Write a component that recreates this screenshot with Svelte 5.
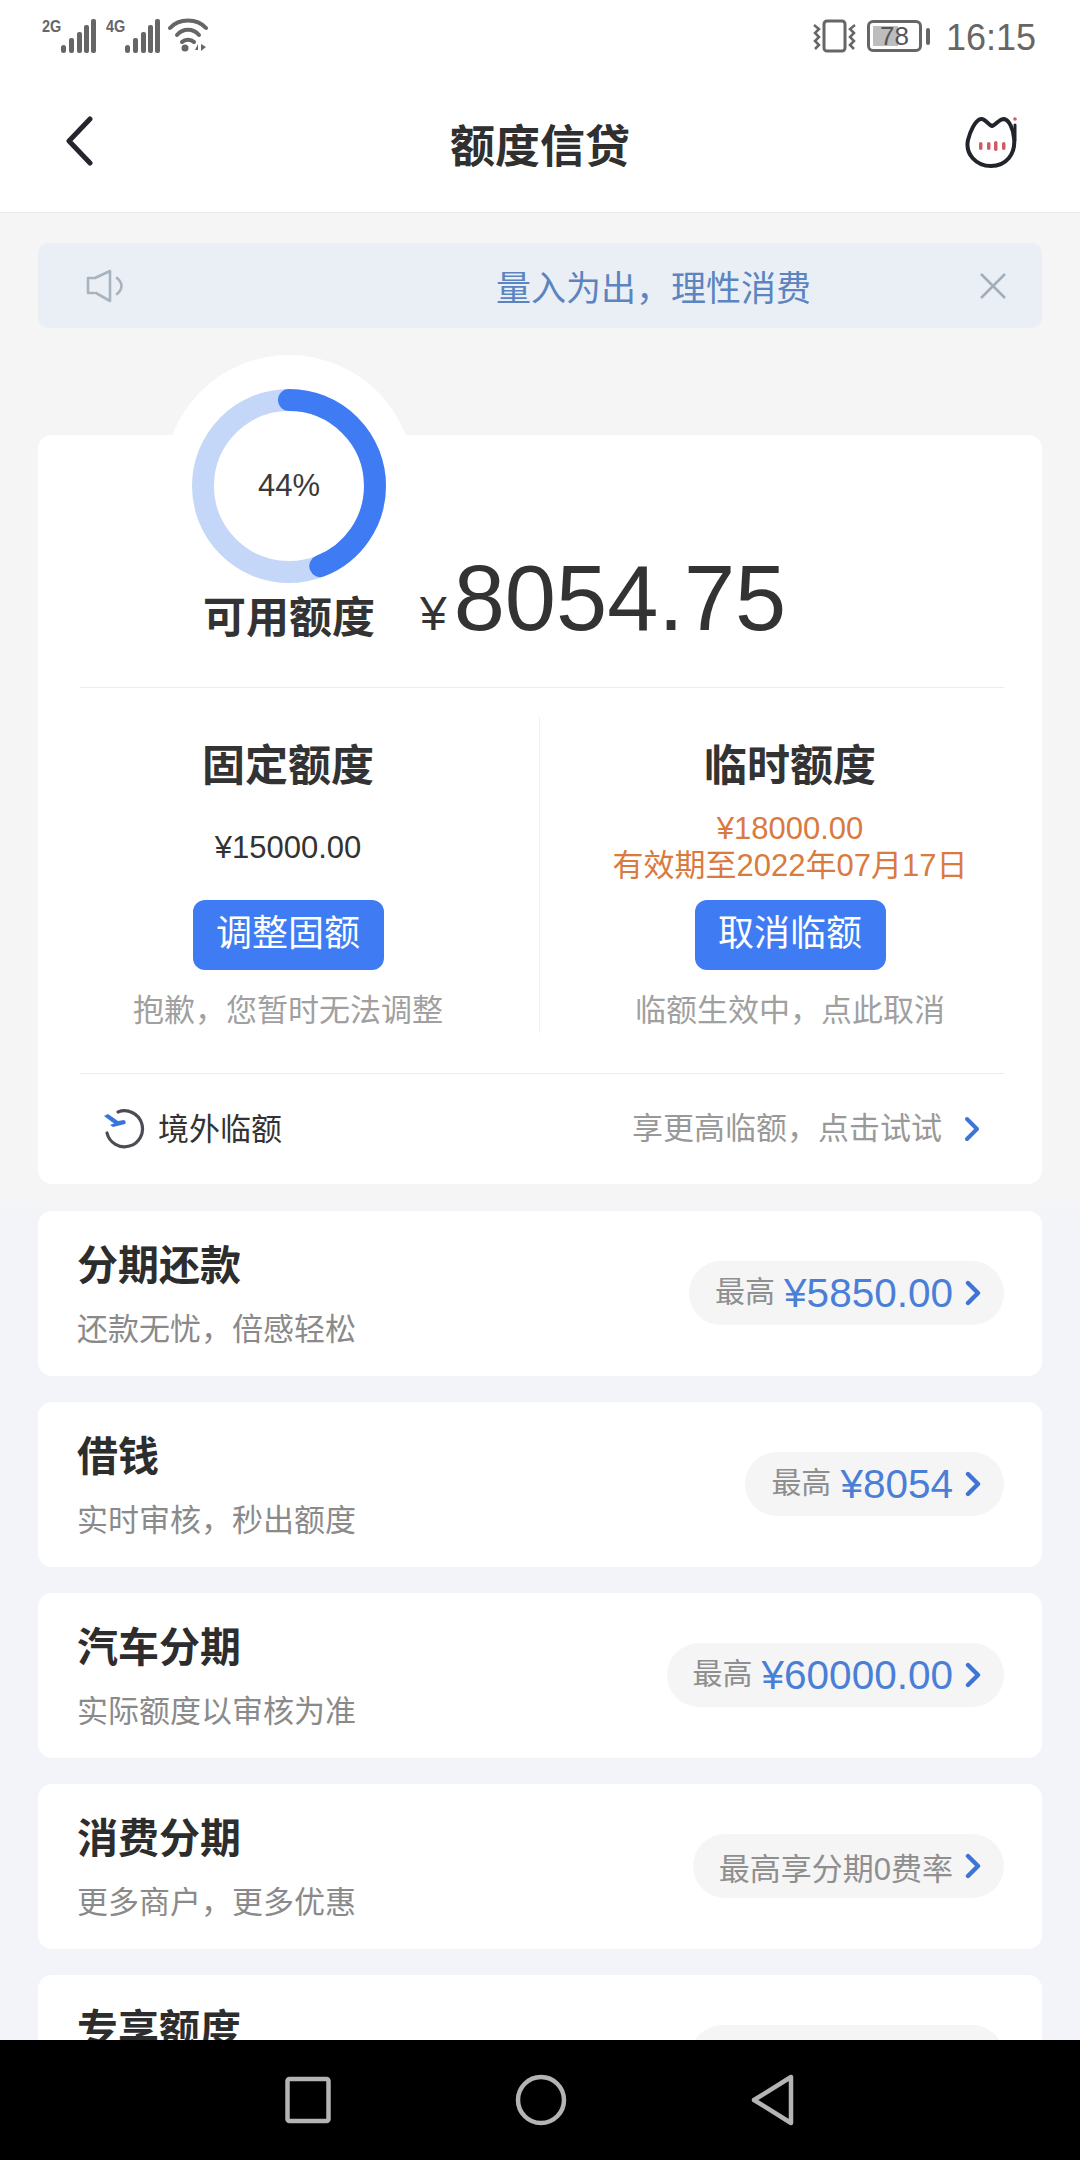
<script>
  const rows = [
    { title: '分期还款', sub: '还款无忧，倍感轻松', amount: '¥5850.00' },
    { title: '借钱', sub: '实时审核，秒出额度', amount: '¥8054' },
    { title: '汽车分期', sub: '实际额度以审核为准', amount: '¥60000.00' },
    { title: '消费分期', sub: '更多商户，更多优惠', note: '最高享分期0费率' }
  ];
  const r = 86;
  const c = 2 * Math.PI * r;
  const dash = `${c * 0.44} ${c}`;
</script>

<div class="phone">
  <div class="top">
    <div class="status">
      <div class="status-left">
        <span class="net">2G</span>
        <svg width="38" height="36" viewBox="0 0 38 36" class="bars">
          <g fill="#666"><rect x="0" y="26" width="5" height="8" rx="2.5"/><rect x="8" y="19" width="5" height="15" rx="2"/><rect x="16" y="13" width="5" height="21" rx="2"/><rect x="23" y="6" width="5" height="28" rx="2"/><rect x="30" y="0" width="5" height="34" rx="2"/></g>
        </svg>
        <span class="net net2">4G</span>
        <svg width="38" height="36" viewBox="0 0 38 36" class="bars">
          <g fill="#666"><rect x="0" y="26" width="5" height="8" rx="2.5"/><rect x="8" y="19" width="5" height="15" rx="2"/><rect x="16" y="13" width="5" height="21" rx="2"/><rect x="23" y="6" width="5" height="28" rx="2"/><rect x="30" y="0" width="5" height="34" rx="2"/></g>
        </svg>
        <svg width="42" height="36" viewBox="0 0 42 36" class="wifi">
          <g fill="none" stroke="#666" stroke-width="4" stroke-linecap="round">
            <path d="M2 10 C11 0 29 0 38 10"/><path d="M9 17 C15 10 25 10 31 17"/><path d="M14 24 C17 21 23 21 26 24"/>
          </g>
          <circle cx="17" cy="30" r="3.5" fill="#666"/>
          <path d="M27 32 L30 26 V32 Z M33 26 V33 L38 29 Z" fill="#666"/>
        </svg>
      </div>
      <div class="status-right">
        <svg class="vib" width="44" height="34" viewBox="0 0 44 34">
          <rect x="11" y="2" width="21" height="30" rx="3" fill="none" stroke="#666" stroke-width="3"/>
          <g fill="none" stroke="#666" stroke-width="2.5"><path d="M1 6 L6 10 L2 14 L6 18 L2 22 L6 26 L2 30"/><path d="M42 6 L37 10 L41 14 L37 18 L41 22 L37 26 L41 30"/></g>
        </svg>
        <div class="battery"><span class="fill"></span><span class="level">78</span></div>
        <span class="tip"></span>
        <span class="time">16:15</span>
      </div>
    </div>
    <header class="nav">
      <svg class="back" width="30" height="50" viewBox="0 0 30 50"><path d="M26 3 L5 25 L26 47" fill="none" stroke="#25252d" stroke-width="5" stroke-linecap="round" stroke-linejoin="round"/></svg>
      <h1>额度信贷</h1>
      <svg class="cat" width="56" height="54" viewBox="0 0 56 54">
        <path d="M4 24 C6 16 11 4 17 3 C21 2 24 9 28 10 C32 9 35 3 40 3 C45 4 49 12 50 22 C52 38 42 50 27 50 C12 50 1 38 4 24 Z" fill="#fff" stroke="#22242c" stroke-width="4" stroke-linejoin="round"/>
        <path d="M51 9 V24" stroke="#22242c" stroke-width="3" stroke-linecap="round"/>
        <g fill="#cf5a68"><rect x="15" y="26" width="3.5" height="8" rx="1.7"/><rect x="23" y="26" width="3.5" height="8" rx="1.7"/><rect x="30" y="25" width="3.5" height="10" rx="1.7"/><rect x="38" y="26" width="3.5" height="8" rx="1.7"/></g>
        <circle cx="51" cy="3" r="1.8" fill="#cf5a68"/>
      </svg>
    </header>
  </div>

  <main class="content">
    <div class="notice">
      <svg width="38" height="34" viewBox="0 0 38 34"><g fill="none" stroke="#a8b3c0" stroke-width="2.6" stroke-linejoin="round" stroke-linecap="round"><path d="M8 24 H2 V9 H9 L24 2 V32 L10 24"/><path d="M31 9 C37 14 37 20 31 25"/></g></svg>
      <span>量入为出，理性消费</span>
      <svg width="28" height="28" viewBox="0 0 28 28"><path d="M2 2 L26 26 M26 2 L2 26" stroke="#a3aebb" stroke-width="2.6" fill="none"/></svg>
    </div>

    <section class="card main">
      <div class="summary">
        <div class="gauge-col">
          <div class="gauge">
            <svg width="194" height="194" viewBox="0 0 194 194">
              <circle cx="97" cy="97" r={r} fill="#fff" stroke="#c5d7f8" stroke-width="22"/>
              <circle cx="97" cy="97" r={r} fill="none" stroke="#3f7cf4" stroke-width="22" stroke-linecap="round" stroke-dasharray={dash} transform="rotate(-90 97 97)"/>
            </svg>
            <span class="pct">44%</span>
          </div>
          <div class="avail">可用额度</div>
        </div>
        <div class="amount"><span class="yen">¥</span>8054.75</div>
      </div>

      <div class="limits">
        <div class="limit">
          <h2>固定额度</h2>
          <div class="value">¥15000.00</div>
          <div class="btn">调整固额</div>
          <p>抱歉，您暂时无法调整</p>
        </div>
        <div class="limit">
          <h2>临时额度</h2>
          <div class="value temp"><span>¥18000.00</span><span>有效期至2022年07月17日</span></div>
          <div class="btn">取消临额</div>
          <p>临额生效中，点此取消</p>
        </div>
      </div>

      <div class="abroad">
        <svg width="42" height="42" viewBox="0 0 42 42">
          <path d="M14 4 A18 18 0 1 1 3 25" fill="none" stroke="#4a4d54" stroke-width="3.2" stroke-linecap="round"/>
          <path d="M0 8 L4 6 L14 13 L20 12 Q23 14 21 16 L9 19 L6 17 L10 15.5 Z" fill="#3a74dc"/>
        </svg>
        <span class="abroad-title">境外临额</span>
        <span class="abroad-tip">享更高临额，点击试试</span>
        <svg class="chev" width="16" height="26" viewBox="0 0 16 26"><path d="M3 3 L13 13 L3 23" fill="none" stroke="#3f74d6" stroke-width="4" stroke-linecap="round" stroke-linejoin="round"/></svg>
      </div>
    </section>

    {#each rows as row}
      <section class="card row">
        <div>
          <h3>{row.title}</h3>
          <p>{row.sub}</p>
        </div>
        <div class="pill">
          {#if row.note}
            <span class="note">{row.note}</span>
          {:else}
            <span class="label">最高</span>
            <span class="money">{row.amount}</span>
          {/if}
          <svg class="chev" width="16" height="26" viewBox="0 0 16 26"><path d="M3 3 L13 13 L3 23" fill="none" stroke="#3f74d6" stroke-width="4.4" stroke-linecap="round" stroke-linejoin="round"/></svg>
        </div>
      </section>
    {/each}

    <section class="card row">
      <div>
        <h3>专享额度</h3>
      </div>
      <div class="pill blank"></div>
    </section>
  </main>

  <footer class="sysnav">
    <svg width="46" height="48" viewBox="0 0 46 48"><rect x="2.5" y="3" width="41" height="42" rx="2" fill="none" stroke="#b4b4b4" stroke-width="4.5"/></svg>
    <svg width="52" height="52" viewBox="0 0 52 52"><circle cx="26" cy="26" r="23" fill="none" stroke="#b4b4b4" stroke-width="4.5"/></svg>
    <svg width="44" height="52" viewBox="0 0 44 52"><path d="M40 3 V49 L3 26 Z" fill="none" stroke="#b4b4b4" stroke-width="4.5" stroke-linejoin="round"/></svg>
  </footer>
</div>

<style>
  :global(body) {
    margin: 0;
    background: #000;
  }
  .phone {
    width: 1080px;
    height: 2160px;
    display: flex;
    flex-direction: column;
    overflow: hidden;
    font-family: "Liberation Sans", "Noto Sans CJK SC", sans-serif;
    color: #333;
  }
  .top {
    background: #fff;
    border-bottom: 1px solid #e9e9e9;
  }
  .status {
    height: 70px;
    padding: 18px 44px 0 42px;
    box-sizing: border-box;
    display: flex;
    justify-content: space-between;
    align-items: flex-start;
  }
  .status-left, .status-right {
    display: flex;
    align-items: flex-start;
  }
  .net {
    font: bold 17px/17px "Liberation Sans", sans-serif;
    color: #666;
    width: 19px;
    transform: scaleX(0.85);
    transform-origin: left;
  }
  .net2 { margin-left: 7px; }
  .bars { margin-top: 1px; }
  .wifi { margin-left: 5px; margin-top: 0; }
  .status-right svg { margin-top: 1px; }
  .vib { margin-right: 8px; }
  .battery {
    position: relative;
    width: 55px;
    height: 32px;
    box-sizing: border-box;
    border: 3px solid #666;
    border-radius: 6px;
    margin: 2px 0 0 2px;
    display: flex;
    align-items: center;
    justify-content: center;
  }
  .fill {
    position: absolute;
    left: 3px;
    top: 3px;
    bottom: 3px;
    width: 25px;
    background: #bdbdbd;
  }
  .level {
    position: relative;
    font-size: 26px;
    line-height: 26px;
    color: #555;
  }
  .tip {
    width: 4px;
    height: 17px;
    margin: 10px 0 0 4px;
    background: #666;
    border-radius: 2px;
  }
  .time {
    margin-left: 16px;
    font-size: 36px;
    line-height: 40px;
    color: #666;
    letter-spacing: 0;
  }
  .nav {
    height: 142px;
    position: relative;
    display: flex;
    align-items: center;
    justify-content: space-between;
    padding: 0 60px 0 64px;
    box-sizing: border-box;
  }
  .nav h1 {
    position: absolute;
    left: 0;
    right: 0;
    top: 48px;
    margin: 0;
    text-align: center;
    font-size: 45px;
    line-height: 60px;
    font-weight: 700;
    color: #303030;
  }
  .cat { margin-top: 4px; }
  .content {
    flex: 1;
    min-height: 0;
    overflow: hidden;
    padding: 30px 38px 0;
    display: flex;
    flex-direction: column;
    gap: 26px;
    background: linear-gradient(#f5f5f5 0, #f5f5f5 980px, #f2f4f9 1010px);
  }
  .notice {
    flex: none;
    height: 85px;
    margin-bottom: 81px;
    box-sizing: border-box;
    padding: 0 35px 0 48px;
    display: flex;
    align-items: center;
    justify-content: space-between;
    background: #eaeff5;
    border-radius: 10px;
  }
  .notice span {
    font-size: 35px;
    color: #5b84c0;
    margin-left: 204px;
  }
  .card {
    flex: none;
    background: #fff;
    border-radius: 14px;
  }
  .main {
    height: 749px;
    box-sizing: border-box;
    padding: 0 38px 0 42px;
    margin-bottom: 1px;
  }
  .summary {
    display: flex;
    align-items: flex-end;
    height: 252px;
    border-bottom: 1px solid #ececec;
  }
  .gauge-col {
    position: relative;
    margin: -46px 0 0 112px;
    width: 194px;
    display: flex;
    flex-direction: column;
    align-items: center;
    align-self: flex-start;
  }
  .gauge-col::before {
    content: "";
    position: absolute;
    left: -28px;
    top: -34px;
    width: 250px;
    height: 250px;
    border-radius: 50%;
    background: #fff;
  }
  .gauge {
    position: relative;
    width: 194px;
    height: 194px;
  }
  .gauge svg { display: block; }
  .pct {
    position: absolute;
    inset: 0;
    display: flex;
    align-items: center;
    justify-content: center;
    font-size: 31px;
    color: #3a3a3a;
  }
  .avail {
    position: relative;
    margin-top: 5px;
    font-size: 43px;
    line-height: 60px;
    font-weight: 700;
    white-space: nowrap;
    color: #333;
  }
  .amount {
    margin: 0 0 23px 34px;
    font-size: 92px;
    line-height: 100px;
    color: #333;
    white-space: nowrap;
  }
  .yen {
    font-size: 48px;
    margin-right: 7px;
  }
  .limits {
    display: grid;
    grid-template-columns: 460px 1fr;
    margin-top: 29px;
    height: 316px;
  }
  .limit {
    display: flex;
    flex-direction: column;
    align-items: center;
    padding-top: 24px;
    box-sizing: border-box;
    height: 316px;
  }
  .limit:first-child {
    border-right: 1px solid #f0f0f0;
    padding-right: 43px;
  }
  .limit:last-child { padding-left: 36px; }
  .limit h2 {
    margin: 0;
    font-size: 43px;
    line-height: 50px;
    font-weight: 700;
    color: #333;
  }
  .value {
    height: 104px;
    margin-top: 4px;
    margin-bottom: 1px;
    display: flex;
    flex-direction: column;
    justify-content: center;
    align-items: center;
    font-size: 31px;
    line-height: 37px;
    color: #333;
    white-space: nowrap;
  }
  .temp { color: #d97a40; }
  .btn {
    width: 191px;
    height: 70px;
    line-height: 68px;
    text-align: center;
    background: #3f7cf4;
    color: #fff;
    border-radius: 12px;
    font-size: 36px;
  }
  .limit p {
    margin: 19px 0 0;
    font-size: 31px;
    line-height: 44px;
    color: #a0a0a0;
    white-space: nowrap;
  }
  .abroad {
    margin-top: 40px;
    border-top: 1px solid #ececec;
    height: 110px;
    display: flex;
    align-items: center;
    padding-left: 24px;
    padding-right: 24px;
  }
  .abroad-title {
    margin-left: 12px;
    font-size: 31px;
    line-height: 40px;
    margin-top: 2px;
    color: #333;
  }
  .abroad-tip {
    margin-left: auto;
    font-size: 31px;
    line-height: 40px;
    margin-top: 0;
    color: #999;
  }
  .abroad .chev { margin-left: 22px; }
  .row {
    height: 165px;
    box-sizing: border-box;
    display: flex;
    justify-content: space-between;
    align-items: flex-start;
    padding: 30px 38px 0 39px;
  }
  .row h3 {
    margin: 0;
    font-size: 41px;
    line-height: 50px;
    font-weight: 700;
    color: #2d2d2d;
  }
  .row p {
    margin: 17px 0 0;
    font-size: 31px;
    line-height: 44px;
    color: #8a8a8a;
  }
  .pill {
    height: 64px;
    margin-top: 20px;
    padding: 0 23px 0 26px;
    display: flex;
    align-items: center;
    background: #f5f5f5;
    border-radius: 32px;
  }
  .pill.blank { width: 265px; }
  .label {
    font-size: 30px;
    line-height: 40px;
    margin-top: -2px;
    color: #8f8f8f;
  }
  .money {
    margin-left: 9px;
    font-size: 40.5px;
    color: #4a7fd8;
  }
  .note {
    font-size: 31px;
    color: #8f8f8f;
  }
  .pill .chev { margin-left: 12px; }
  .sysnav {
    flex: none;
    height: 120px;
    background: #000;
    position: relative;
    display: flex;
    align-items: center;
    justify-content: center;
    gap: 184px;
  }
  .sysnav svg { display: block; }
</style>
